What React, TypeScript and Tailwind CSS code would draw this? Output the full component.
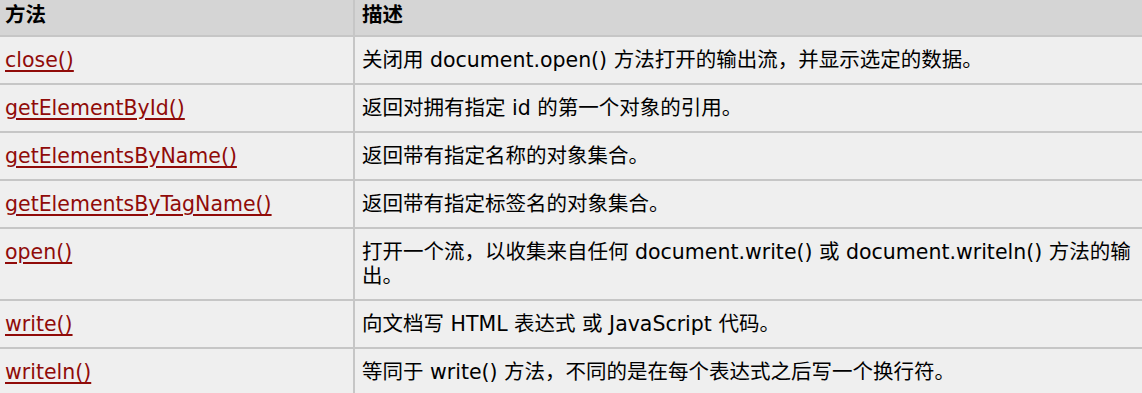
const rows: { name: string; desc: React.ReactNode }[] = [
  { name: "close()", desc: "关闭用 document.open() 方法打开的输出流，并显示选定的数据。" },
  { name: "getElementById()", desc: "返回对拥有指定 id 的第一个对象的引用。" },
  { name: "getElementsByName()", desc: "返回带有指定名称的对象集合。" },
  { name: "getElementsByTagName()", desc: "返回带有指定标签名的对象集合。" },
  { name: "open()", desc: "打开一个流，以收集来自任何 document.write() 或 document.writeln() 方法的输出。" },
  { name: "write()", desc: "向文档写 HTML 表达式 或 JavaScript 代码。" },
  { name: "writeln()", desc: "等同于 write() 方法，不同的是在每个表达式之后写一个换行符。" },
];

export default function App() {
  return (
    <div className="w-[1142px] h-[393px] overflow-hidden bg-[#efefef] font-['DejaVu_Sans','Noto_Sans_CJK_SC',sans-serif] text-[20.5px] leading-[24px] text-black">
      <table className="w-[1142px] border-collapse table-fixed">
        <colgroup>
          <col className="w-[354px]" />
          <col />
        </colgroup>
        <thead>
          <tr className="bg-[#d5d5d5]">
            <th className="text-left font-bold pl-[5px] pt-[3px] pb-[8px] border-b-2 border-r-2 border-[#c6c6c6]">方法</th>
            <th className="text-left font-bold pl-[7px] pt-[3px] pb-[8px] border-b-2 border-[#c6c6c6]">描述</th>
          </tr>
        </thead>
        <tbody>
          {rows.map((r) => (
            <tr key={r.name} className="bg-[#efefef]">
              <td className="align-top pl-[5px] py-[11px] border-b-2 border-r-2 border-[#c6c6c6]">
                <a href="#" className="text-[#900b09] underline underline-offset-[3px]">
                  {r.name}
                </a>
              </td>
              <td className="align-top pl-[7px] pr-0 py-[11px] border-b-2 border-[#c6c6c6]">{r.desc}</td>
            </tr>
          ))}
        </tbody>
      </table>
    </div>
  );
}
